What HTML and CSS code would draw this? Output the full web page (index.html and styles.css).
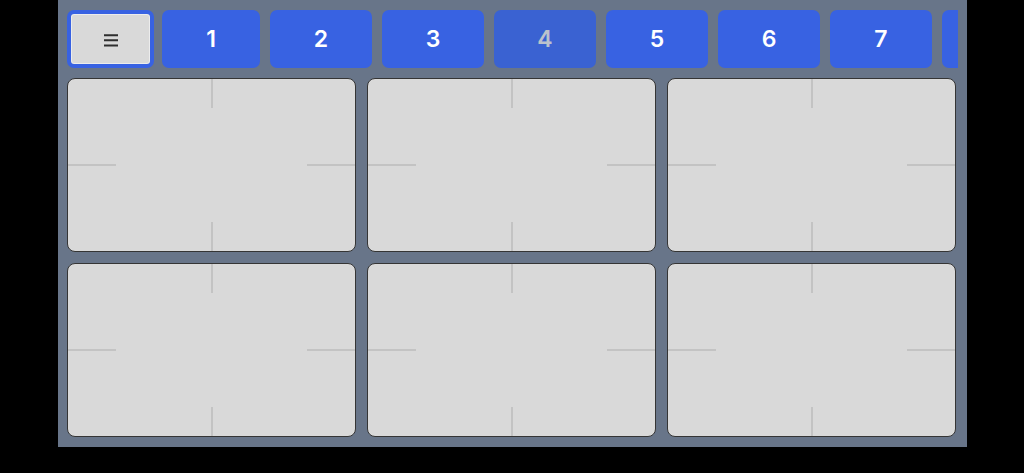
FILE: index.html
```html
<!DOCTYPE html>
<html lang="en">
<head>
<meta charset="utf-8">
<title>Grid</title>
<link rel="stylesheet" href="styles.css">
</head>
<body>
<div class="panel">
  <div class="toolbar">
    <button class="menu" type="button" aria-label="Menu">
      <svg width="16" height="14" viewBox="0 0 16 14" aria-hidden="true">
        <path d="M1 2.2h14M1 7.2h14M1 12.4h14" stroke="#2e2e2e" stroke-width="2" fill="none"/>
      </svg>
    </button>
    <button class="num narrow" type="button">1</button>
    <button class="num" type="button">2</button>
    <button class="num" type="button">3</button>
    <button class="num off" type="button">4</button>
    <button class="num" type="button">5</button>
    <button class="num" type="button">6</button>
    <button class="num" type="button">7</button>
    <button class="num" type="button">8</button>
  </div>
  <div class="grid">
    <div class="card"></div>
    <div class="card"></div>
    <div class="card"></div>
    <div class="card"></div>
    <div class="card"></div>
    <div class="card"></div>
  </div>
</div>
</body>
</html>
```

FILE: styles.css
```css
html, body {
  margin: 0;
  padding: 0;
  background: #000;
}
body {
  font-family: Inter, "Liberation Sans", sans-serif;
}
.panel {
  width: 909px;
  height: 447px;
  margin: 0 auto;
  background: #687589;
  box-sizing: border-box;
  padding: 10px 10px 10px 9.5px;
  display: flex;
  flex-direction: column;
  gap: 10px;
}
.toolbar {
  display: flex;
  gap: 10px;
  height: 58px;
  flex: 0 0 auto;
  overflow: hidden;
  margin-right: -1px;
}
.toolbar button {
  flex: 0 0 auto;
  height: 58px;
  border-radius: 7px;
  font-family: Inter, "Liberation Sans", sans-serif;
  padding: 0;
  cursor: pointer;
}
.toolbar .menu {
  width: 87px;
  margin: 0 -2px 0 0;
  background: #d9d9d9;
  border: 4px solid #3862e2;
  box-shadow: inset 0 0 0 1px #ececec;
  display: flex;
  align-items: center;
  justify-content: center;
}
.menu svg {
  display: block;
  margin-top: 1px;
}
.num {
  width: 102px;
  margin: 0;
  background: #3862e2;
  border: none;
  color: #fff;
  font-size: 23px;
  font-weight: 600;
}
.num.narrow {
  width: 98px;
}
.num.off {
  background: #3a62d2;
  color: #bcc2cc;
}
.grid {
  flex: 1 1 auto;
  display: grid;
  grid-template-columns: 1fr 1fr 1fr;
  grid-template-rows: 1fr 1fr;
  gap: 11px;
}
.card {
  border: 1px solid #353535;
  border-radius: 8px;
  background:
    linear-gradient(#c3c3c3, #c3c3c3) center top / 2px 29px no-repeat,
    linear-gradient(#c3c3c3, #c3c3c3) center bottom / 2px 29px no-repeat,
    linear-gradient(#c3c3c3, #c3c3c3) left center / 48px 2px no-repeat,
    linear-gradient(#c3c3c3, #c3c3c3) right center / 48px 2px no-repeat,
    #d9d9d9;
}
```
